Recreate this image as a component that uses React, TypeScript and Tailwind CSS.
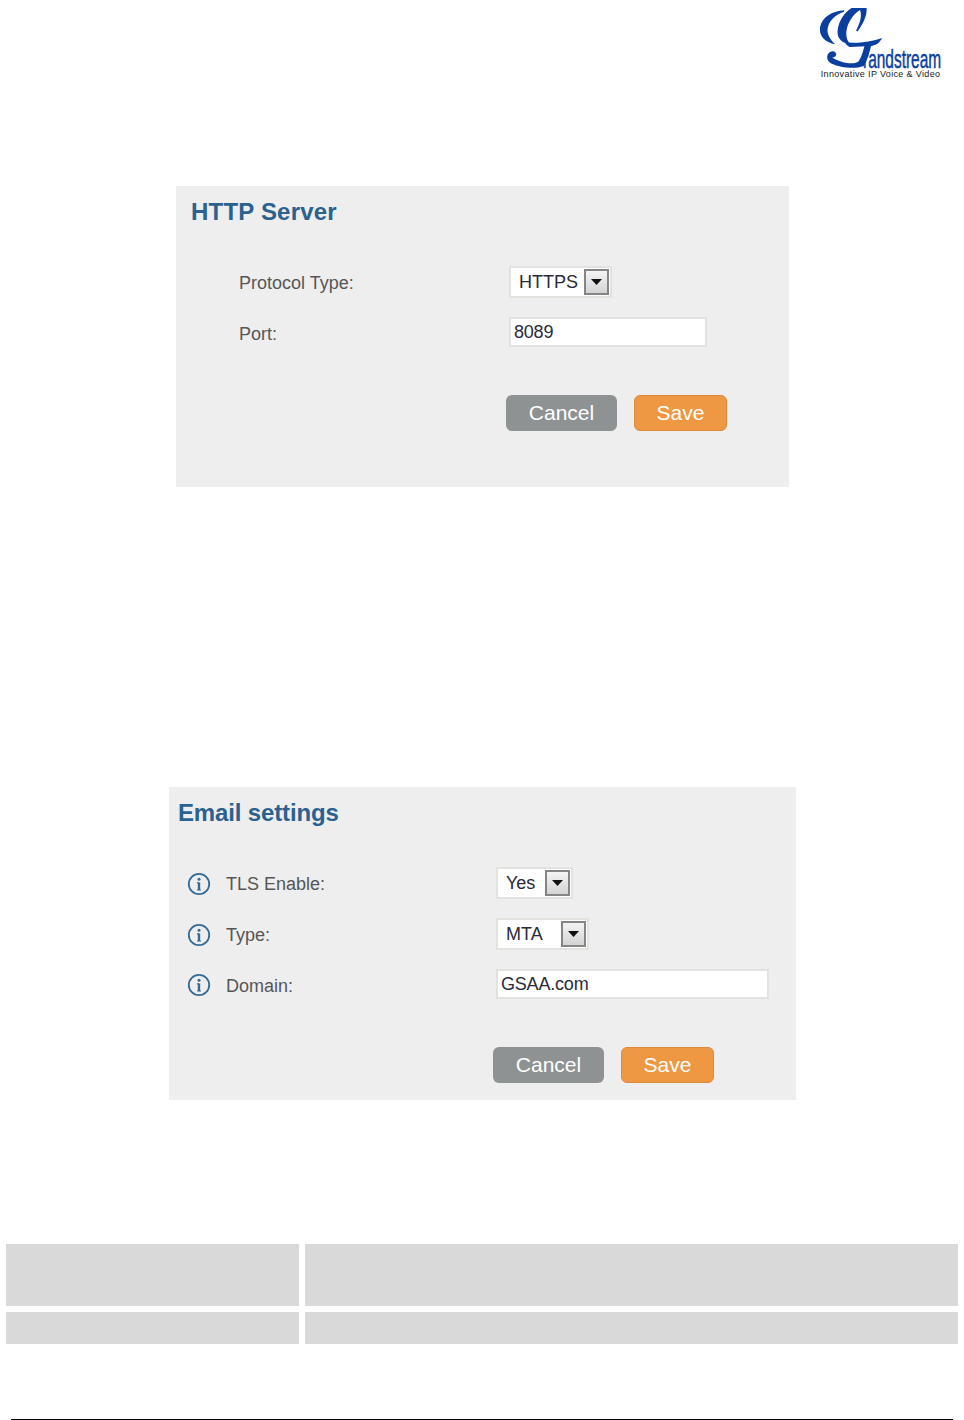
const Logo = () => (
  <svg width="124" height="72" viewBox="54 24 372 216" aria-label="Grandstream logo">
    <g fill="#0b3f9f">
      <path d="M132 31 C100 33 66 50 60 82 C56 108 76 128 106 133 C92 120 80 104 83 84 C87 62 106 44 132 35 Z" />
      <path d="M196 11 C152 12 118 50 113 90 C110 114 124 130 150 132 C140 122 136 104 141 84 C148 58 166 38 180 30 C186 44 182 66 168 92 L173 94 C196 62 206 32 196 11 Z" />
      <path d="M134 127 C170 131 215 126 246 114 C240 128 228 136 213 138 L150 141 C142 139 138 133 134 127 Z" />
      <path d="M214 134 C208 160 201 184 191 198 C162 209 120 202 95 191 C79 183 77 165 90 156 C102 149 114 160 106 169 C102 174 96 172 94 170 C112 186 164 198 177 182 C186 168 190 150 194 136 Z" />
      <text transform="translate(189 203) scale(0.58 1)" fontFamily="'Liberation Sans', sans-serif" fontSize="80" stroke="#0b3f9f" strokeWidth="1.5">randstream</text>
    </g>
    <text x="62" y="232" fill="#222222" fontFamily="'Liberation Sans', sans-serif" fontSize="27" textLength="358" lengthAdjust="spacing">Innovative IP Voice &amp; Video</text>
  </svg>
);

const Select = ({ value, w, pad }: { value: string; w: string; pad: string }) => (
  <div className={`flex h-8 items-center justify-between border-2 border-[#e2e2de] bg-white pr-px text-[18px] text-[#2a2a3a] ${w} ${pad}`}>
    <span>{value}</span>
    <span className="flex h-[26px] w-[25px] items-center justify-center border-2 border-[#858585] bg-gradient-to-b from-[#f4f4f4] to-[#d4d4d4]">
      <svg width="11" height="6" viewBox="0 0 11 6"><path d="M0 0h11L5.5 6z" fill="#111" /></svg>
    </span>
  </div>
);

const Input = ({ value, w }: { value: string; w: string }) => (
  <div className={`flex h-[30px] items-center border-2 border-[#e2e2de] bg-white pl-[3px] text-[18px] tracking-[-0.2px] text-[#2a2a3a] ${w}`}>{value}</div>
);

const Buttons = () => (
  <div className="flex gap-[17px] text-[21px] text-white">
    <div className="flex h-9 w-[111px] items-center justify-center rounded-[6px] bg-[#8e9293]">Cancel</div>
    <div className="flex h-9 w-[93px] items-center justify-center rounded-[6px] border border-[#dd8a38] bg-[#ee9843]">Save</div>
  </div>
);

const Info = () => (
  <svg width="24" height="24" viewBox="0 0 24 24" className="relative top-px shrink-0">
    <circle cx="12" cy="12" r="10.2" fill="none" stroke="#336b96" strokeWidth="1.8" />
    <circle cx="12" cy="7.2" r="1.5" fill="#336b96" />
    <path d="M12 10.5v7.5" stroke="#336b96" strokeWidth="2.4" />
    <path d="M10 10.8h2M10 18h4" stroke="#336b96" strokeWidth="1.2" />
  </svg>
);

const Label = ({ text, offset }: { text: string; offset: string }) => (
  <span className={`text-[18px] text-[#565656] ${offset}`}>{text}</span>
);

export default function App() {
  return (
    <div className="flex h-[1420px] w-[964px] flex-col bg-white font-['Liberation_Sans',Arial,sans-serif]">
      <header className="flex h-[186px] shrink-0 justify-end pr-[22px] pt-[8px]">
        <Logo />
      </header>

      <section className="ml-[176px] h-[301px] w-[613px] shrink-0 bg-[#eeeeee] pt-[12px]">
        <h2 className="pl-[15px] text-[24px] leading-[28px] font-bold tracking-[0.2px] text-[#2a6190]">HTTP Server</h2>
        <div className="mt-[40px] flex items-center pl-[63px]">
          <div className="w-[270px]"><Label text="Protocol Type:" offset="relative top-px" /></div>
          <Select value="HTTPS" w="w-[103px]" pad="pl-[8px]" />
        </div>
        <div className="mt-[19px] flex items-center pl-[63px]">
          <div className="w-[270px]"><Label text="Port:" offset="relative top-[2px]" /></div>
          <Input value="8089" w="w-[198px]" />
        </div>
        <div className="mt-[48px] pl-[330px]">
          <Buttons />
        </div>
      </section>

      <section className="ml-[169px] mt-[300px] h-[313px] w-[627px] shrink-0 bg-[#eeeeee] pt-[12px]">
        <h2 className="pl-[9px] text-[24px] leading-[28px] font-bold tracking-[-0.15px] text-[#2a6190]">Email settings</h2>
        <div className="mt-[40px] flex items-center pl-[18px]">
          <div className="flex w-[309px] items-center gap-[15px]"><Info /><Label text="TLS Enable:" offset="relative top-px" /></div>
          <Select value="Yes" w="w-[77px]" pad="pl-[8px]" />
        </div>
        <div className="mt-[19px] flex items-center pl-[18px]">
          <div className="flex w-[309px] items-center gap-[15px]"><Info /><Label text="Type:" offset="relative top-px" /></div>
          <Select value="MTA" w="w-[93px]" pad="pl-[8px]" />
        </div>
        <div className="mt-[19px] flex items-center pl-[18px]">
          <div className="flex w-[309px] items-center gap-[15px]"><Info /><Label text="Domain:" offset="relative top-[2px]" /></div>
          <Input value="GSAA.com" w="w-[273px]" />
        </div>
        <div className="mt-[48px] pl-[324px]">
          <Buttons />
        </div>
      </section>

      <div className="ml-[6px] mt-[144px] grid w-[952px] shrink-0 grid-cols-[293px_653px] grid-rows-[62px_32px] gap-[6px]">
        <div className="bg-[#d9d9d9]" />
        <div className="bg-[#d9d9d9]" />
        <div className="bg-[#d9d9d9]" />
        <div className="bg-[#d9d9d9]" />
      </div>

      <div className="mx-[11px] mt-auto h-px shrink-0 bg-black" />
    </div>
  );
}
